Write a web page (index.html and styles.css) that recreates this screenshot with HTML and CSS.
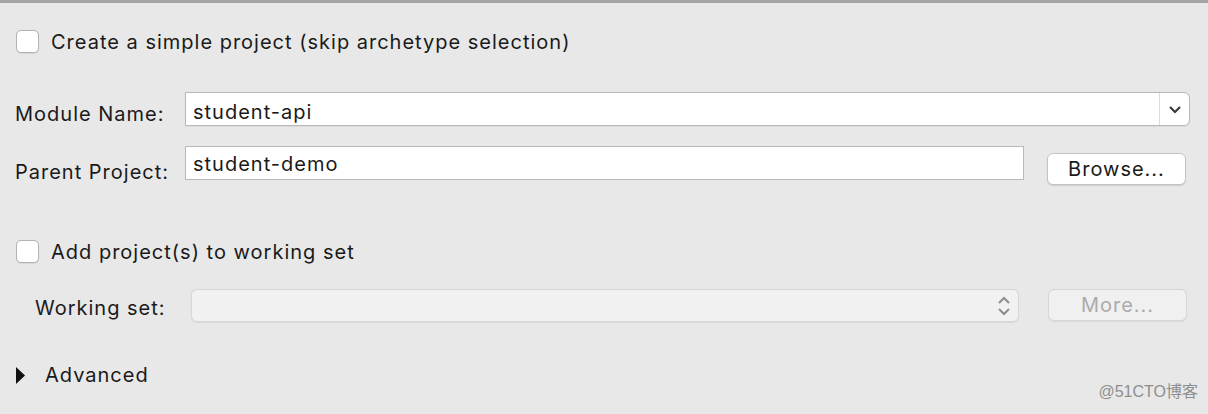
FILE: index.html
```html
<!DOCTYPE html>
<html>
<head>
<meta charset="utf-8">
<link rel="stylesheet" href="styles.css">
</head>
<body>
<div class="panel">
  <div class="check-row">
    <span class="checkbox"></span>
    <span class="check-label">Create a simple project (skip archetype selection)</span>
  </div>

  <div class="field-row module-row">
    <span class="label label-module">Module Name:</span>
    <div class="combo">
      <span class="combo-text">student-api</span>
      <span class="combo-btn">
        <svg width="14" height="9" viewBox="0 0 14 9"><path d="M2 2 L7 7 L12 2" fill="none" stroke="#3a3a3a" stroke-width="2.2"/></svg>
      </span>
    </div>
  </div>

  <div class="field-row parent-row">
    <span class="label label-parent">Parent Project:</span>
    <div class="textbox">student-demo</div>
    <button class="btn browse">Browse...</button>
  </div>

  <div class="check-row check-row-2">
    <span class="checkbox"></span>
    <span class="check-label">Add project(s) to working set</span>
  </div>

  <div class="field-row ws-row">
    <span class="label label-ws">Working set:</span>
    <div class="select-disabled">
      <svg class="updown" width="14" height="22" viewBox="0 0 14 22"><path d="M2 8 L7 3 L12 8 M2 14 L7 19 L12 14" fill="none" stroke="#8c8c8c" stroke-width="2"/></svg>
    </div>
    <button class="btn more" disabled>More...</button>
  </div>

  <div class="advanced-row">
    <svg class="tri" width="9" height="17" viewBox="0 0 9 17"><path d="M0 0 L9 8.5 L0 17 Z" fill="#111"/></svg>
    <span class="adv-label">Advanced</span>
  </div>
</div>
<div class="watermark">@51CTO博客</div>
</body>
</html>
```

FILE: styles.css
```css
html, body {
  margin: 0;
  padding: 0;
}
body {
  background: #e8e8e8;
  border-top: 3px solid #a6a6a6;
  width: 1208px;
  height: 411px;
  position: relative;
  overflow: hidden;
  font-family: Inter, "Liberation Sans", sans-serif;
  font-size: 20px;
  color: #1a1a1a;
  letter-spacing: 1px;
}
.panel {
  padding: 27px 0 0 0;
}
.check-row {
  display: flex;
  align-items: center;
  height: 23px;
  margin-left: 16px;
}
.checkbox {
  width: 21px;
  height: 21px;
  border: 1px solid #b3b3b3;
  border-radius: 5px;
  background: #fff;
  box-shadow: 0 0.5px 1px rgba(0,0,0,0.08);
}
.check-label {
  margin-left: 12px;
  line-height: 24px;
}
.field-row {
  display: flex;
  align-items: flex-start;
  padding-left: 15px;
}
.module-row {
  margin-top: 39px;
}
.label {
  line-height: 24px;
  flex: none;
}
.label-module {
  width: 170px;
  margin-top: 10px;
}
.combo {
  width: 1003px;
  height: 32px;
  border: 1px solid #b8b8b8;
  border-radius: 0 6px 6px 0;
  background: #fff;
  display: flex;
  box-shadow: 0 0.5px 1px rgba(0,0,0,0.06);
}
.combo-text {
  flex: 1;
  padding: 7px 0 0 7px;
  line-height: 24px;
}
.combo-btn {
  width: 29px;
  border-left: 1px solid #dcdcdc;
  display: flex;
  align-items: center;
  justify-content: center;
  padding-top: 1px;
}
.parent-row {
  margin-top: 20px;
}
.label-parent {
  width: 170px;
  margin-top: 14px;
}
.textbox {
  width: 830px;
  height: 27px;
  border: 1px solid #b8b8b8;
  background: #fff;
  padding: 5px 0 0 7px;
  line-height: 24px;
}
.btn {
  font-family: inherit;
  font-size: 20px;
  letter-spacing: 1px;
  width: 139px;
  height: 32px;
  border-radius: 6px;
  padding: 0 0 1px 0;
  line-height: 24px;
}
.browse {
  margin: 7px 0 0 23px;
  background: #fff;
  border: 1px solid #c4c4c4;
  color: #1a1a1a;
  box-shadow: 0 1px 1px rgba(0,0,0,0.12);
}
.check-row-2 {
  margin-top: 55px;
}
.ws-row {
  margin-top: 26px;
  padding-left: 35px;
}
.label-ws {
  width: 156px;
  margin-top: 7px;
}
.select-disabled {
  width: 825px;
  height: 31px;
  border: 1px solid #d6d6d6;
  border-radius: 6px;
  background: #f1f1f1;
  display: flex;
  align-items: center;
  justify-content: flex-end;
  padding-right: 1px;
  box-shadow: 0 0.5px 1px rgba(0,0,0,0.06);
}
.updown {
  margin-right: 6px;
}
.more {
  margin: 0 0 0 29px;
  background: #f0f0f0;
  border: 1px solid #d6d6d6;
  color: #ababab;
  box-shadow: 0 0.5px 1px rgba(0,0,0,0.06);
}
.advanced-row {
  display: flex;
  align-items: center;
  margin: 44px 0 0 16px;
  height: 18px;
}
.adv-label {
  margin-left: 20px;
  line-height: 24px;
}
.watermark {
  position: absolute;
  right: 10px;
  bottom: 12px;
  font-family: "Liberation Sans", "Noto Sans CJK SC", sans-serif;
  font-size: 16px;
  color: #8e8e8e;
  letter-spacing: 0;
}
```
